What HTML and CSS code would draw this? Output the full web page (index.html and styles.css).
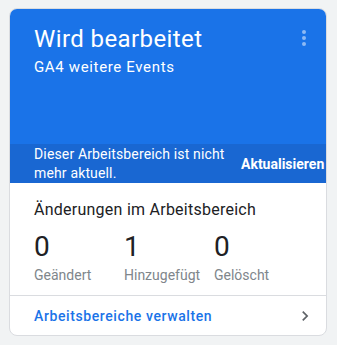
FILE: index.html
```html
<!DOCTYPE html>
<html lang="de">
<head>
<meta charset="utf-8">
<link rel="stylesheet" href="styles.css">
</head>
<body>
<div class="card">
  <div class="head">
    <div class="head-row">
      <div class="titles">
        <div class="title">Wird bearbeitet</div>
        <div class="subtitle">GA4 weitere Events</div>
      </div>
      <svg class="kebab" width="24" height="24" viewBox="0 0 24 24"><circle cx="12" cy="6" r="2"/><circle cx="12" cy="12" r="2"/><circle cx="12" cy="18" r="2"/></svg>
    </div>
  </div>
  <div class="banner">
    <div class="banner-text">Dieser Arbeitsbereich ist nicht mehr aktuell.</div>
    <div class="banner-btn">Aktualisieren</div>
  </div>
  <div class="body">
    <div class="section-title">Änderungen im Arbeitsbereich</div>
    <div class="stats">
      <div class="stat"><div class="num">0</div><div class="label">Geändert</div></div>
      <div class="stat"><div class="num">1</div><div class="label">Hinzugefügt</div></div>
      <div class="stat"><div class="num">0</div><div class="label">Gelöscht</div></div>
    </div>
  </div>
  <div class="footer">
    <span class="link">Arbeitsbereiche verwalten</span>
    <svg class="chev" width="20" height="20" viewBox="0 0 24 24"><path d="M10 6L8.59 7.41 13.17 12l-4.58 4.59L10 18l6-6z"/></svg>
  </div>
</div>
</body>
</html>
```
FILE: styles.css
```css
html, body { margin: 0; padding: 0; }
body {
  background: #f1f3f4;
  font-family: Roboto, "Liberation Sans", sans-serif;
  padding: 8px 0 0 9px;
  width: 337px;
  height: 345px;
  box-sizing: border-box;
}
.card {
  width: 318px;
  box-sizing: border-box;
  border: 1px solid #dadce0;
  border-radius: 8px;
  background: #fff;
  overflow: hidden;
}
.head {
  background: #1a73e8;
  height: 135px;
  box-sizing: border-box;
  padding: 14px 10px 0 24px;
  color: #fff;
}
.head-row { display: flex; justify-content: space-between; align-items: flex-start; }
.title { font-size: 24px; line-height: 32px; letter-spacing: 0.4px; }
.subtitle { font-size: 15px; line-height: 20px; margin-top: 2px; letter-spacing: 0.65px; }
.kebab { fill: rgba(255,255,255,0.5); margin-top: 3px; flex: none; }
.banner {
  background: #1967d2;
  height: 39px;
  box-sizing: border-box;
  padding-left: 24px;
  display: flex;
  align-items: center;
  color: #fff;
  font-size: 14px;
  white-space: nowrap;
}
.banner-text { width: 207px; white-space: normal; line-height: 19px; flex: none; letter-spacing: 0.15px; }
.banner-btn { font-weight: 700; flex: none; }
.body { padding: 15px 24px 10px; }
.section-title { font-size: 16px; line-height: 24px; color: #202124; letter-spacing: 0.25px; }
.stats { display: grid; grid-template-columns: 90px 90px 90px; margin-top: 7px; }
.num { font-size: 28px; line-height: 36px; color: #202124; }
.label { font-size: 14px; line-height: 20px; color: #80868b; }
.footer {
  border-top: 1px solid #dadce0;
  padding: 10px 11px 9px 24px;
  display: flex;
  justify-content: space-between;
  align-items: center;
}
.link { font-size: 14px; line-height: 20px; font-weight: 500; color: #1a73e8; letter-spacing: 0.6px; }
.chev { fill: #5f6368; }
```
